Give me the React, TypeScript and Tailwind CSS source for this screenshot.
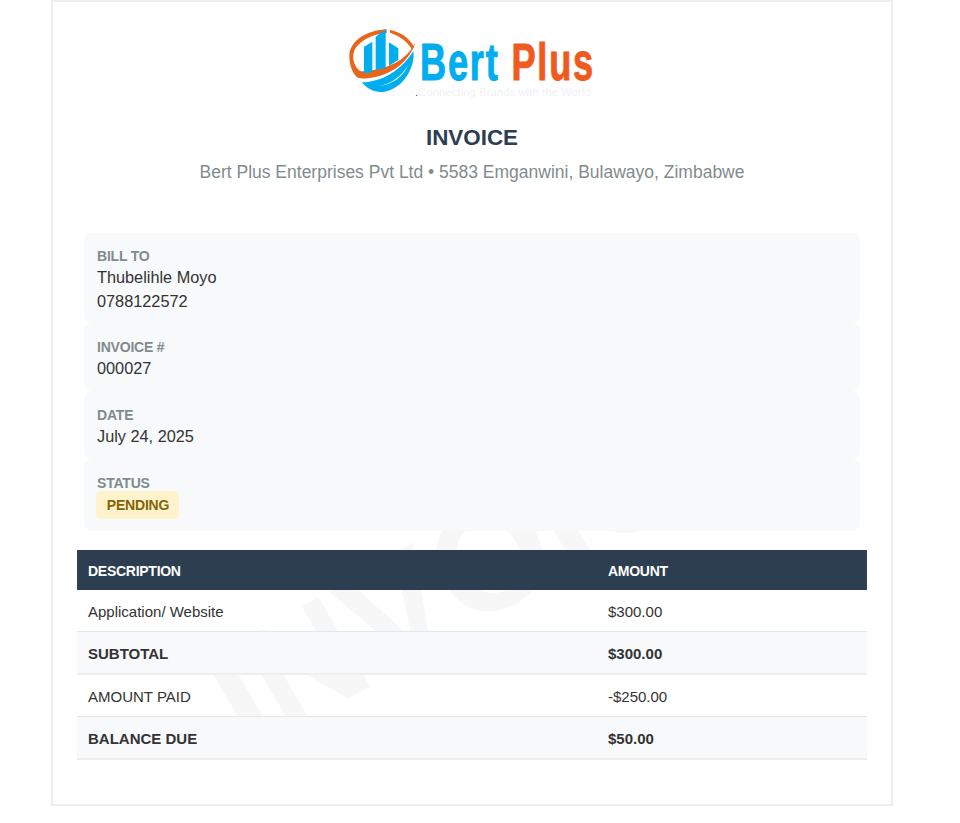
import React from 'react';

const font = "font-['Liberation_Sans',Arial,sans-serif]";

const Logo = () => (
  <div className="flex items-start h-[122px] pl-[268px] pt-[23px]">
    <svg width="75" height="70" viewBox="0 0 225 210" className="block shrink-0">
      <path d="M125 13 C70 15 14 45 13 92 C13 120 22 140 32 152 C36 162 60 163 95 155 C140 145 190 115 212 52 C190 95 150 122 100 132 C75 137 55 140 45 138 C30 125 24 110 25 92 C27 55 75 28 125 24 Z" fill="#e8661a" />
      <path d="M135 15 C165 20 195 40 207 66 L201 74 C188 50 162 31 135 23 Z" fill="#e8661a" />
      <path d="M57 65 L82 50 L82 142 L57 145 Z" fill="#00aeef" />
      <path d="M92 35 L122 13 L122 130 L92 135 Z" fill="#00aeef" />
      <path d="M132 52 L160 70 L160 105 L132 122 Z" fill="#00aeef" />
      <path d="M50 172 C110 172 170 135 205 78 C212 125 175 190 120 200 C92 205 68 193 50 172 Z" fill="#00aeef" />
      <path d="M100 183 C140 178 170 152 190 120 C174 156 140 180 100 183 Z" fill="#ffffff" />
    </svg>
    <div className="ml-[1px] w-[172px] mt-[14px]">
      <div className="font-bold text-[51px] leading-[48px] origin-left scale-x-[0.71] tracking-[2.5px] whitespace-nowrap [-webkit-text-stroke:1px] -ml-[1px]">
        <span className="text-[#00aeef]">Bert</span> <span className="text-[#f15a1f]">Plus</span>
      </div>
      <div className="text-[11px] leading-3 -mt-[1px] -ml-[6px] tracking-[0.2px] text-[#eff2f3] whitespace-nowrap">
        <span className="text-[#555]">.</span>Connecting Brands with the World
      </div>
    </div>
  </div>
);

const InfoBlock = ({ label, className, children }: { label: string; className: string; children: React.ReactNode }) => (
  <div className={`bg-[#f8f9fa] rounded-lg px-[13px] relative ${className}`}>
    <div className="text-[14px] tracking-[-0.2px] font-bold text-[#7f8c8d] leading-4">{label}</div>
    {children}
  </div>
);

const value = 'text-[16.3px] leading-6';
const cellLeft = 'px-[11px] pt-[4px] w-[520px]';
const cellRight = 'px-[11px] pt-[4px]';

export default function App() {
  return (
    <div className={`${font} bg-white min-h-[823px]`}>
      <div className="relative ml-[51px] w-[842px] h-[806px] border-2 border-[#eeeeee] px-6 overflow-hidden">
        <div className="absolute left-[17px] top-[480px] w-[840px] text-center text-[150px] font-bold text-black/[0.03] -rotate-30 leading-none">INVOICE</div>
        <div className="relative">
          <Logo />
          <h1 className="text-[22.4px] font-bold text-[#2c3e50] text-center leading-7">INVOICE</h1>
          <p className="text-[17.5px] text-[#7f8c8d] text-center mt-2 leading-6">Bert Plus Enterprises Pvt Ltd • 5583 Emganwini, Bulawayo, Zimbabwe</p>
          <div className="mx-[7px] mt-[49px] text-[#333333]">
            <InfoBlock label="BILL TO" className="h-[90px] pt-[15px]">
              <div className={`${value} mt-[1px]`}>Thubelihle Moyo</div>
              <div className={value}>0788122572</div>
            </InfoBlock>
            <InfoBlock label="INVOICE #" className="h-[68px] pt-4">
              <div className={`${value} mt-[1px]`}>000027</div>
            </InfoBlock>
            <InfoBlock label="DATE" className="h-[68px] pt-4">
              <div className={`${value} mt-[1px]`}>July 24, 2025</div>
            </InfoBlock>
            <InfoBlock label="STATUS" className="h-[72px] pt-4">
              <span className="block w-[83px] h-[28px] -ml-[1px] bg-[#fff3cd] text-[#856404] text-[14px] tracking-[-0.2px] font-bold rounded-[5px] text-center leading-[29px] pl-[1px]">PENDING</span>
            </InfoBlock>
          </div>
          <table className="w-[790px] mt-[19px] border-collapse text-[15px] text-[#333333]">
            <thead>
              <tr className="bg-[#2c3e50] text-white text-[14px] tracking-[-0.27px] font-bold h-[40px]">
                <td className="px-[11px] pt-[2px] w-[520px]">DESCRIPTION</td>
                <td className="px-[11px] pt-[2px]">AMOUNT</td>
              </tr>
            </thead>
            <tbody>
              <tr className="border-b border-[#e6e6e6] h-[41px]">
                <td className={cellLeft}>Application/ Website</td>
                <td className={cellRight}>$300.00</td>
              </tr>
              <tr className="border-b-2 border-[#eeeeee] h-[43px] bg-[#f8f9fa] font-bold">
                <td className={cellLeft}>SUBTOTAL</td>
                <td className={cellRight}>$300.00</td>
              </tr>
              <tr className="border-b border-[#e6e6e6] h-[42px]">
                <td className={cellLeft}>AMOUNT PAID</td>
                <td className={cellRight}>-$250.00</td>
              </tr>
              <tr className="border-b-2 border-[#eeeeee] h-[43px] bg-[#f8f9fa] font-bold">
                <td className={cellLeft}>BALANCE DUE</td>
                <td className={cellRight}>$50.00</td>
              </tr>
            </tbody>
          </table>
        </div>
      </div>
    </div>
  );
}
